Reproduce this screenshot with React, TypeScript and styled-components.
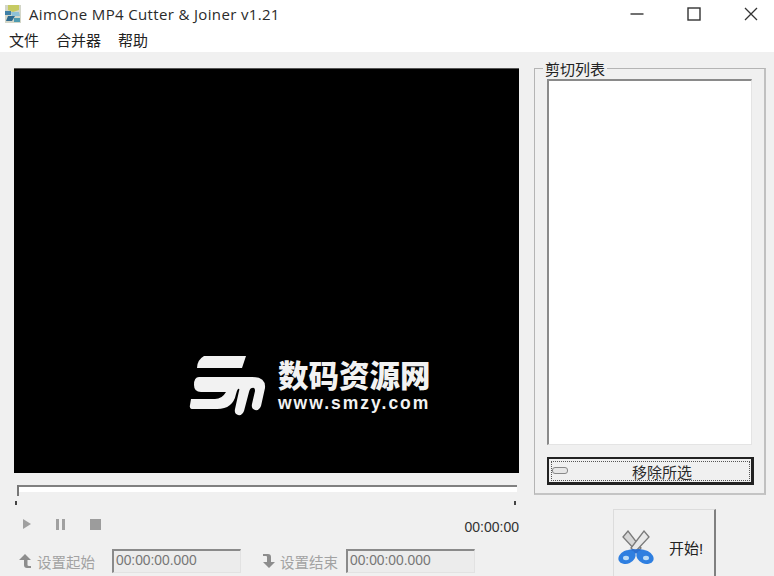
import * as React from 'react';
import styled, { createGlobalStyle } from 'styled-components';

const cjk = `"Liberation Sans", "Noto Sans CJK SC", sans-serif`;

const Global = createGlobalStyle`
  html, body { margin: 0; padding: 0; background: #f0f0f0; overflow: hidden; }
  * { box-sizing: border-box; }
`;

const Win = styled.div`
  width: 774px;
  height: 576px;
  overflow: hidden;
  font-family: ${cjk};
  background: #f0f0f0;
  display: flex;
  flex-direction: column;
`;

const TitleBar = styled.div`
  height: 27px;
  background: #fff;
  display: flex;
  align-items: center;
  padding-left: 4px;
`;

const AppTitle = styled.span`
  margin-left: 7px;
  font-family: "Open Sans", sans-serif;
  font-size: 15px;
  color: #2a2a2a;
  letter-spacing: 0.35px;
  white-space: nowrap;
`;

const WinButtons = styled.div`
  margin-left: auto;
  display: flex;
  align-items: center;
  gap: 43px;
  padding-right: 16px;
`;

const MenuBar = styled.div`
  height: 25px;
  background: #fff;
  display: flex;
  align-items: center;
  padding: 0 0 1px 9px;
  gap: 17px;
  font-size: 15px;
  color: #222;
`;

const Body = styled.div`
  flex: 1;
  display: flex;
  min-height: 0;
`;

const LeftCol = styled.div`
  width: 534px;
  padding: 16px 0 0 14px;
  display: flex;
  flex-direction: column;
`;

const Video = styled.div`
  position: relative;
  width: 505px;
  height: 405px;
  background: #000;
  border-top: 1px solid #555;
`;

const Watermark = styled.div`
  position: absolute;
  left: 175px;
  top: 286px;
  display: flex;
  align-items: flex-start;
  gap: 11px;
  color: #f2f2f2;
`;

const MarkText = styled.div`
  display: flex;
  flex-direction: column;
  margin-top: 4px;
`;

const MarkTitle = styled.div`
  font-family: ${cjk};
  font-weight: 900;
  font-size: 30.5px;
  line-height: 34px;
  white-space: nowrap;
`;

const MarkUrl = styled.div`
  font-family: "Liberation Sans", sans-serif;
  font-weight: 700;
  font-size: 17.5px;
  line-height: 20px;
  letter-spacing: 2px;
  white-space: nowrap;
`;

const SliderWrap = styled.div`
  position: relative;
  height: 24px;
  margin: 12px 0 0 3px;
  width: 500px;
`;

const Track = styled.div`
  height: 7px;
  background: #fff;
  border-top: 2px solid #808080;
`;

const Thumb = styled.div`
  position: absolute;
  left: 0;
  top: 0;
  width: 2px;
  height: 11px;
  background: #777;
`;

const Tick = styled.div<{ $right?: boolean }>`
  position: absolute;
  top: 16px;
  ${p => (p.$right ? 'right: 1px;' : 'left: -2px;')}
  width: 2px;
  height: 4px;
  background: #444;
`;

const Transport = styled.div`
  display: flex;
  align-items: center;
  width: 505px;
  height: 30px;
  padding-left: 9px;
`;

const TransportIcons = styled.div`
  display: flex;
  align-items: center;
  gap: 25px;
`;

const Clock = styled.div`
  margin-left: auto;
  font-size: 14px;
  color: #333;
  padding-top: 5px;
`;

const MarkRow = styled.div`
  display: flex;
  align-items: center;
  height: 26px;
  margin-top: 9px;
  padding-left: 5px;
`;

const MarkGroup = styled.div`
  display: flex;
  align-items: center;
  margin-right: 21px;
`;

const MarkLabel = styled.span`
  font-size: 14.5px;
  color: #a2a2a2;
  margin-left: 5px;
  white-space: nowrap;
`;

const TimeField = styled.div<{ $gap: number }>`
  width: 129px;
  height: 24px;
  margin-left: ${p => p.$gap}px;
  padding: 2px 0 0 2px;
  background: #ececec;
  border-top: 2px solid #8a8a8a;
  border-left: 2px solid #8a8a8a;
  border-right: 1px solid #e2e2e2;
  border-bottom: 1px solid #e2e2e2;
  color: #777;
  font-size: 13.8px;
  white-space: nowrap;
`;

const RightCol = styled.div`
  flex: 1;
  display: flex;
  flex-direction: column;
`;

const Group = styled.fieldset`
  flex-shrink: 0;
  width: 232px;
  height: 433px;
  margin: 10px 0 0 0;
  padding: 0 12px;
  border: 1px solid #b4b4b4;
  border-right: 2px solid #c0c0c0;
  border-bottom: 2px solid #c4c4c4;
  min-width: 0;
`;

const GroupLegend = styled.legend`
  font-size: 15px;
  line-height: 16px;
  color: #222;
  padding: 0 2px;
  margin-left: -4px;
  height: 12px;
`;

const List = styled.div`
  width: 205px;
  height: 366px;
  margin-top: 5px;
  background: #fff;
  border-top: 2px solid #8a8a8a;
  border-left: 2px solid #8a8a8a;
  border-right: 1px solid #e4e4e4;
  border-bottom: 1px solid #e4e4e4;
`;

const RemoveBtn = styled.button`
  position: relative;
  display: block;
  width: 207px;
  height: 28px;
  margin: 12px 0 0 0;
  padding: 0;
  background: #f0f0f0;
  border: 2px solid #222;
  border-right-width: 3px;
  border-bottom-width: 3px;
  font-family: ${cjk};
  font-size: 15px;
  color: #2a2a2a;
  outline: 1px dotted #555;
  outline-offset: -5px;
`;

const BtnGlyph = styled.span`
  position: absolute;
  left: 3px;
  top: 8px;
  width: 16px;
  height: 7px;
  border: 1px solid #888;
  border-radius: 3px;
  background: #e6e6e6;
`;

const BtnLabel = styled.span`
  position: relative;
  left: 12px;
  top: 1px;
`;

const StartBtn = styled.button`
  flex-shrink: 0;
  display: flex;
  align-items: center;
  width: 103px;
  height: 80px;
  margin: 14px 0 0 79px;
  padding: 0 0 5px 4px;
  background: #f0f0f0;
  border: 0;
  border-top: 1px solid #dcdcdc;
  border-left: 1px solid #dcdcdc;
  border-right: 2px solid #808080;
  font-family: ${cjk};
  font-size: 15px;
  color: #222;
`;

const StartLabel = styled.span`
  margin-left: 13px;
  white-space: nowrap;
`;

const AppIcon = () => (
  <svg width="18" height="20" viewBox="0 0 18 20">
    <rect x="1" y="1" width="16" height="18" fill="#d3d6c8" />
    <path d="M4 1 H15 V6 L9 8 L4 6Z" fill="#c6ca62" />
    <rect x="1" y="7" width="6" height="4" fill="#3f7fa6" />
    <path d="M7 8 H15 L16 12 H8Z" fill="#8fc1d6" />
    <path d="M4 12 H11 L8 17 H2Z" fill="#2f6a8f" />
    <rect x="10" y="14" width="6" height="4" fill="#4f9bb0" />
  </svg>
);

const MinIcon = () => (
  <svg width="14" height="14" viewBox="0 0 14 14">
    <path d="M0.5 7 H13.5" stroke="#333" strokeWidth="1.4" />
  </svg>
);

const MaxIcon = () => (
  <svg width="14" height="14" viewBox="0 0 14 14">
    <rect x="1" y="1" width="12" height="12" fill="none" stroke="#333" strokeWidth="1.4" />
  </svg>
);

const CloseIcon = () => (
  <svg width="14" height="14" viewBox="0 0 14 14">
    <path d="M1 1 L13 13 M13 1 L1 13" stroke="#333" strokeWidth="1.3" />
  </svg>
);

const SmLogo = () => (
  <svg width="78" height="61" viewBox="5 5 78 61">
    <path fill="#f2f2f2" d="M20 6 H62 L58 18 H13 Q13 10 20 6Z" />
    <path
      fill="#f2f2f2"
      d="M15 27 H68 Q82 27 81 38 L77 56 Q75 61 71 60 Q67 59 68 54 L71 41 Q71 37 68 38 Q66 38 65 42 L60 61 Q58 66 54 65 Q50 64 51 59 L55 41 Q56 38 54 39 Q53 40 52 44 Q49 59 33 59 H9 Q5 59 6 55 L7 49 H31 Q38 49 42 42 H17 Q10 42 10 35 Q10 27 15 27Z"
    />
  </svg>
);

const PlayIcon = () => (
  <svg width="8" height="10" viewBox="0 0 8 10">
    <path d="M0 0 L8 5 L0 10Z" fill="#a0a0a0" />
  </svg>
);

const PauseIcon = () => (
  <svg width="9" height="11" viewBox="0 0 9 11">
    <path d="M0 0 H3 V11 H0Z M6 0 H9 V11 H6Z" fill="#a0a0a0" />
  </svg>
);

const StopIcon = () => (
  <svg width="11" height="11" viewBox="0 0 11 11">
    <rect width="11" height="11" fill="#9c9c9c" />
  </svg>
);

const UpHook = () => (
  <svg width="13" height="14" viewBox="0 0 13 14">
    <path d="M6 0 L12 6 H8.5 V11 Q8.5 12 10 12 H12 V14 H8 Q5 14 5 11 V6 H0Z" fill="#8d8d8d" />
  </svg>
);

const DownHook = () => (
  <svg width="13" height="14" viewBox="0 0 13 14">
    <path d="M1 0 H6 Q9 0 9 3 V8 H13 L7 14 L1 8 H5 V3 Q5 2 4 2 H1Z" fill="#8d8d8d" />
  </svg>
);

const Scissors = () => (
  <svg width="38" height="34" viewBox="8 10 38 34">
    <path d="M13 17 L18 11 L31 28 L27 32Z" fill="#d6d6d6" stroke="#7a7a7a" strokeWidth="1.3" />
    <path d="M39 17 L34 11 L21 28 L25 32Z" fill="#e8e8e8" stroke="#7a7a7a" strokeWidth="1.3" />
    <path d="M29 30 L23 29 L18 30 L24 35Z" fill="#2a6fd0" />
    <path d="M23 30 L29 29 L35 30 L28 35Z" fill="#2a6fd0" />
    <ellipse cx="17" cy="37" rx="9" ry="6.5" transform="rotate(-25 17 37)" fill="#2f7fe0" />
    <ellipse cx="35" cy="37" rx="9" ry="6.5" transform="rotate(25 35 37)" fill="#2f7fe0" />
    <ellipse cx="16" cy="38" rx="3" ry="2.2" fill="#bcdcf5" />
    <ellipse cx="36" cy="38" rx="3" ry="2.2" fill="#bcdcf5" />
  </svg>
);

const App: React.FC = () => (
  <Win>
    <Global />
    <TitleBar>
      <AppIcon />
      <AppTitle>AimOne MP4 Cutter &amp; Joiner v1.21</AppTitle>
      <WinButtons>
        <MinIcon />
        <MaxIcon />
        <CloseIcon />
      </WinButtons>
    </TitleBar>
    <MenuBar>
      <span>文件</span>
      <span>合并器</span>
      <span>帮助</span>
    </MenuBar>
    <Body>
      <LeftCol>
        <Video>
          <Watermark>
            <SmLogo />
            <MarkText>
              <MarkTitle>数码资源网</MarkTitle>
              <MarkUrl>www.smzy.com</MarkUrl>
            </MarkText>
          </Watermark>
        </Video>
        <SliderWrap>
          <Track />
          <Thumb />
          <Tick />
          <Tick $right />
        </SliderWrap>
        <Transport>
          <TransportIcons>
            <PlayIcon />
            <PauseIcon />
            <StopIcon />
          </TransportIcons>
          <Clock>00:00:00</Clock>
        </Transport>
        <MarkRow>
          <MarkGroup>
            <UpHook />
            <MarkLabel>设置起始</MarkLabel>
            <TimeField $gap={17}>00:00:00.000</TimeField>
          </MarkGroup>
          <MarkGroup>
            <DownHook />
            <MarkLabel>设置结束</MarkLabel>
            <TimeField $gap={8}>00:00:00.000</TimeField>
          </MarkGroup>
        </MarkRow>
      </LeftCol>
      <RightCol>
        <Group>
          <GroupLegend>剪切列表</GroupLegend>
          <List />
          <RemoveBtn>
            <BtnGlyph />
            <BtnLabel>移除所选</BtnLabel>
          </RemoveBtn>
        </Group>
        <StartBtn>
          <Scissors />
          <StartLabel>开始!</StartLabel>
        </StartBtn>
      </RightCol>
    </Body>
  </Win>
);

export default App;
